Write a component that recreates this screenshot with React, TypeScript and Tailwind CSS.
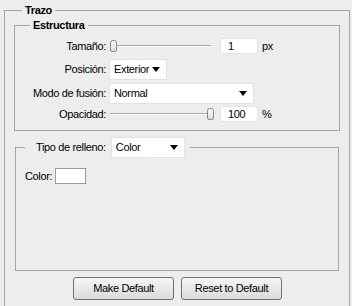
import React from 'react';

function Arrow() {
  return (
    <svg width="8" height="5" viewBox="0 0 8 5" className="shrink-0">
      <path d="M0 0h8L4 5z" fill="#000" />
    </svg>
  );
}

function Select({ value, width }: { value: string; width: string }) {
  return (
    <div
      className={`${width} flex h-[21px] items-center justify-between border border-[#e2e2e2] bg-white pl-[4px] pr-[6px]`}
    >
      <span>{value}</span>
      <Arrow />
    </div>
  );
}

function Slider({ pos }: { pos: number }) {
  return (
    <div className="relative h-[16px] w-[101px]">
      <div className="absolute left-0 right-0 top-[7px] h-[2px] border-t border-[#a8a8a8] bg-white" />
      <div
        className="absolute top-[2px] h-[12px] w-[7px] rounded-t-[3px] rounded-b-[2px] border border-[#8c8c8c] bg-gradient-to-b from-white to-[#dcdcdc]"
        style={{ left: pos }}
      />
    </div>
  );
}

function NumBox({ value }: { value: string }) {
  return (
    <div className="flex h-[16px] w-[38px] items-center border border-[#e4e4e4] bg-white pl-[7px]">
      {value}
    </div>
  );
}

function Row({ label, children, className }: { label: string; children: React.ReactNode; className: string }) {
  return (
    <div className={`flex items-center ${className}`}>
      <div className="w-[91px] shrink-0 text-right">{label}</div>
      <div className="ml-[3px] flex items-center">{children}</div>
    </div>
  );
}

export default function App() {
  return (
    <div className="h-[306px] w-[352px] overflow-hidden bg-[#ededed] pl-[4px] pt-[4px] font-['Liberation_Sans',sans-serif] text-[11px] leading-[13px] tracking-[-0.35px] text-black">
      <fieldset className="h-[330px] w-[346px] border border-b-0 border-[#a3a3a3] px-[9px]">
        <legend className="ml-[8px] px-[3px] font-bold">Trazo</legend>

        <fieldset className="mt-[2px] border border-[#a3a3a3] pb-[8px]">
          <legend className="ml-[15px] px-[3px] font-bold">Estructura</legend>

          <Row label="Tamaño:" className="mt-[6px] h-[16px]">
            <div className="ml-[1px]">
              <Slider pos={0} />
            </div>
            <div className="ml-[9px]">
              <NumBox value="1" />
            </div>
            <span className="ml-[4px]">px</span>
          </Row>

          <Row label="Posición:" className="mt-[5px] h-[21px]">
            <Select value="Exterior" width="w-[58px]" />
          </Row>

          <Row label="Modo de fusión:" className="mt-[3px] h-[21px]">
            <Select value="Normal" width="w-[145px]" />
          </Row>

          <Row label="Opacidad:" className="mt-[2px] h-[16px]">
            <div className="ml-[1px]">
              <Slider pos={97} />
            </div>
            <div className="ml-[9px]">
              <NumBox value="100" />
            </div>
            <span className="ml-[4px]">%</span>
          </Row>
        </fieldset>

        <fieldset className="mx-[1px] mt-[6px] border border-[#a3a3a3] pb-[86px] pl-[9px]">
          <legend className="ml-[0px] flex items-center pl-[11px] pr-[5px]">
            <span>Tipo de relleno:</span>
            <div className="ml-[5px]">
              <Select value="Color" width="w-[74px]" />
            </div>
          </legend>
          <div className="mt-[10px] flex h-[16px] items-center">
            <span>Color:</span>
            <div className="ml-[3px] h-[16px] w-[31px] border border-[#9a9a9a] bg-white" />
          </div>
        </fieldset>

        <div className="mt-[6px] flex justify-center gap-[7px] pl-[1px]">
          <button className="h-[23px] w-[101px] rounded-[3px] border border-[#707070] bg-gradient-to-b from-[#f6f6f6] to-[#dadada] text-[11px]">
            Make Default
          </button>
          <button className="h-[23px] w-[101px] rounded-[3px] border border-[#707070] bg-gradient-to-b from-[#f6f6f6] to-[#dadada] text-[11px]">
            Reset to Default
          </button>
        </div>
      </fieldset>
    </div>
  );
}
